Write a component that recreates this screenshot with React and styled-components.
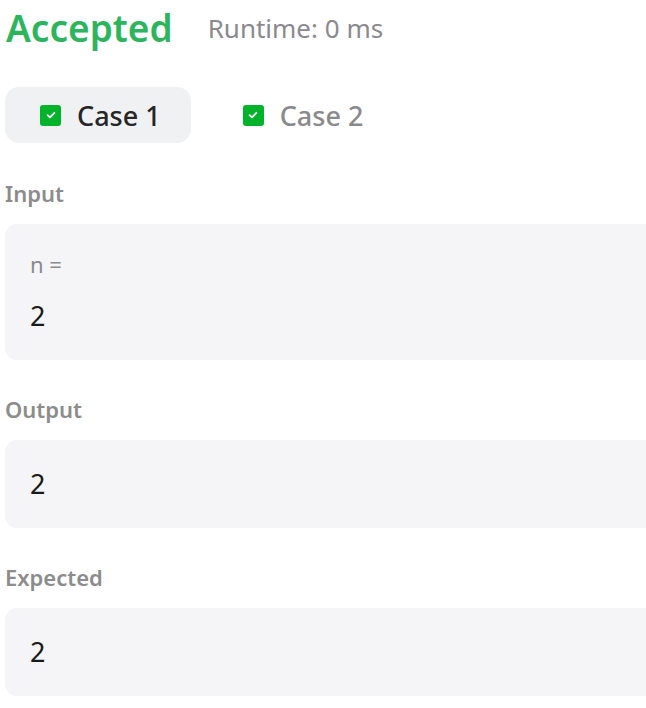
import React from 'react';
import styled, { createGlobalStyle } from 'styled-components';

const GlobalStyle = createGlobalStyle`
  body {
    margin: 0;
    background: #ffffff;
    font-family: "Noto Sans", "Open Sans", sans-serif;
    overflow: hidden;
  }
`;

const cases = [
  { label: 'Case 1', active: true },
  { label: 'Case 2', active: false },
];

const sections = [
  { title: 'Input', name: 'n =', value: '2' },
  { title: 'Output', value: '2' },
  { title: 'Expected', value: '2' },
];

export default function App() {
  return (
    <React.Fragment>
      <GlobalStyle />
      <Panel>
        <Header>
          <Status>Accepted</Status>
          <Runtime>Runtime: 0 ms</Runtime>
        </Header>
        <Tabs>
          {cases.map((c) => (
            <Tab key={c.label} $active={c.active}>
              <Check>
                <svg width="12" height="12" viewBox="0 0 12 12">
                  <path d="M2.6 6.2 L5 8.4 L9.4 3.8" fill="none" stroke="#fff" strokeWidth="1.8" strokeLinecap="round" strokeLinejoin="round" />
                </svg>
              </Check>
              {c.label}
            </Tab>
          ))}
        </Tabs>
        {sections.map((s) => (
          <Section key={s.title}>
            <Label>{s.title}</Label>
            <Box>
              {s.name && <VarName>{s.name}</VarName>}
              <Value>{s.value}</Value>
            </Box>
          </Section>
        ))}
      </Panel>
    </React.Fragment>
  );
}

const Panel = styled.div`
  padding: 0 0 0 5px;
  display: flex;
  flex-direction: column;
`;

const Header = styled.div`
  display: flex;
  align-items: center;
  gap: 35px;
  height: 56px;
  padding-left: 1px;
`;

const Status = styled.div`
  color: #2db55d;
  font-size: 37px;
  font-weight: 600;
  line-height: 56px;
`;

const Runtime = styled.div`
  color: #8a8a8e;
  font-size: 26px;
  line-height: 56px;
`;

const Tabs = styled.div`
  display: flex;
  gap: 17px;
  margin: 31px 0 1px;
`;

const Tab = styled.div`
  display: flex;
  align-items: center;
  gap: 16px;
  height: 56px;
  padding: 0 30px 0 35px;
  border-radius: 14px;
  background: ${(p) => (p.$active ? '#f0f1f3' : 'transparent')};
  color: ${(p) => (p.$active ? '#262626' : '#8a8a8e')};
  font-size: 27px;
  font-weight: 500;
`;

const Check = styled.span`
  display: flex;
  align-items: center;
  justify-content: center;
  width: 21px;
  height: 21px;
  border-radius: 3px;
  background: #00b32a;
`;

const Section = styled.div`
  display: flex;
  flex-direction: column;
  margin-top: 34px;
`;

const Label = styled.div`
  color: #8c8c8c;
  font-size: 22px;
  font-weight: 600;
  line-height: 30px;
  margin-bottom: 16px;
`;

const Box = styled.div`
  width: 700px;
  box-sizing: border-box;
  background: #f5f5f7;
  border-radius: 12px;
  padding: 24px 25px 24px;
  display: flex;
  flex-direction: column;
  gap: 16px;
`;

const VarName = styled.div`
  color: #8a8a8e;
  font-size: 22px;
  line-height: 32px;
`;

const Value = styled.div`
  color: #1a1a1a;
  font-size: 27px;
  line-height: 40px;
`;
